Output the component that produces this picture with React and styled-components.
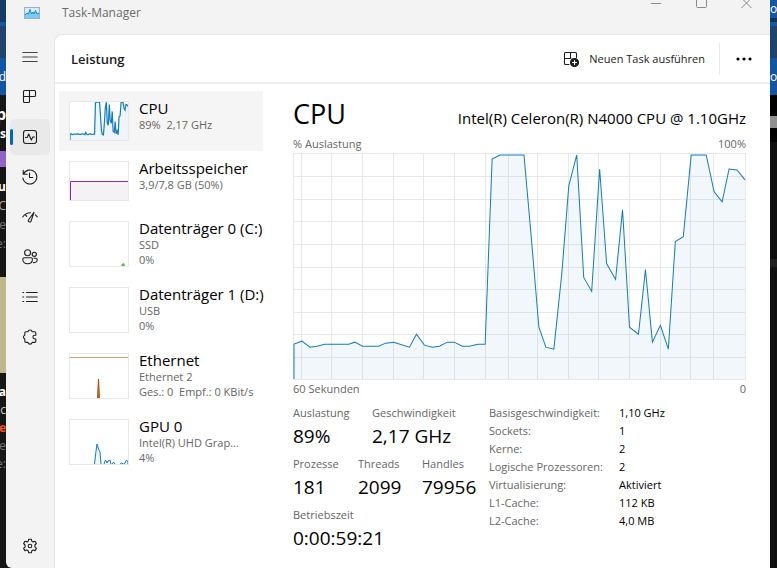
import React, { useState } from 'react';
import styled, { createGlobalStyle } from 'styled-components';

const GlobalStyle = createGlobalStyle`
  * {
    box-sizing: border-box;
  }

  body {
    margin: 0;
    background: #111;
    font-family: 'Open Sans', 'Noto Sans', sans-serif;
    color: #000;
    overflow: hidden;
  }

  button {
    font: inherit;
    color: inherit;
    border: 0;
    padding: 0;
    background: transparent;
    cursor: pointer;
  }
`;

// CPU usage over the last minute, in graph units (453 x 226)
const cpuHistory = [
  [0, 191], [8, 188], [16, 194], [23, 193], [31, 191], [55, 191], [61, 189], [69, 193],
  [75, 193], [85, 193], [92, 190], [100, 189], [116, 194], [123, 181], [131, 192],
  [139, 194], [146, 193], [154, 189], [161, 189], [169, 193], [176, 193], [185, 191],
  [192, 191], [199, 5], [207, 1], [231, 1], [238, 80], [246, 174], [253, 194], [261, 196],
  [269, 120], [276, 32], [284, 1], [291, 124], [299, 138], [307, 15], [314, 110],
  [323, 126], [330, 56], [337, 174], [346, 181], [353, 116], [360, 189], [368, 172],
  [376, 196], [383, 88], [391, 83], [399, 1], [414, 1], [422, 38], [430, 48], [437, 15],
  [445, 16], [453, 26],
];

const gridColumns = [8, 38, 69, 100, 130, 161, 192, 215, 245, 276, 306, 337, 368, 398, 421];
const gridRows = [23, 46, 68, 91, 114, 136, 159, 181, 204];

const cpuPoints = cpuHistory.map((p) => p.join(',')).join(' ');

const resources = [
  { id: 'cpu', title: 'CPU', lines: ['89%  2,17 GHz'] },
  { id: 'memory', title: 'Arbeitsspeicher', lines: ['3,9/7,8 GB (50%)'] },
  { id: 'disk0', title: 'Datenträger 0 (C:)', lines: ['SSD', '0%'] },
  { id: 'disk1', title: 'Datenträger 1 (D:)', lines: ['USB', '0%'] },
  { id: 'ethernet', title: 'Ethernet', lines: ['Ethernet 2', 'Ges.: 0  Empf.: 0 KBit/s'] },
  { id: 'gpu', title: 'GPU 0', lines: ['Intel(R) UHD Grap...', '4%'] },
];

const statRows = [
  [
    { label: 'Auslastung', value: '89%', width: 79 },
    { label: 'Geschwindigkeit', value: '2,17 GHz' },
  ],
  [
    { label: 'Prozesse', value: '181', width: 65 },
    { label: 'Threads', value: '2099', width: 64 },
    { label: 'Handles', value: '79956' },
  ],
  [{ label: 'Betriebszeit', value: '0:00:59:21' }],
];

const specs = [
  ['Basisgeschwindigkeit:', '1,10 GHz'],
  ['Sockets:', '1'],
  ['Kerne:', '2'],
  ['Logische Prozessoren:', '2'],
  ['Virtualisierung:', 'Aktiviert'],
  ['L1-Cache:', '112 KB'],
  ['L2-Cache:', '4,0 MB'],
];

// Desktop behind the window
const Desktop = styled.div`
  display: flex;
  min-height: 100vh;
  background: #161616;
`;

const Strip = styled.div`
  flex: none;
  width: ${(props) => props.$width}px;
  display: flex;
  flex-direction: column;
  overflow: hidden;
`;

const Band = styled.div`
  flex: none;
  height: ${(props) => props.$height}px;
  background: ${(props) => props.$bg || '#161616'};
  color: ${(props) => props.$color || '#fff'};
  font-size: ${(props) => props.$size || 12}px;
  font-weight: ${(props) => (props.$bold ? 700 : 400)};
  line-height: ${(props) => props.$height}px;
  display: flex;
  justify-content: ${(props) => (props.$start ? 'flex-start' : 'flex-end')};
  white-space: nowrap;
`;

const Window = styled.div`
  flex: 1;
  min-width: 0;
  display: flex;
  flex-direction: column;
  background: #f3f3f3;
  border-radius: 0 0 0 6px;
  overflow: hidden;
`;

const TitleBar = styled.header`
  display: flex;
  height: 34px;
  padding: 0 1px 8px 18px;
`;

const AppTitle = styled.div`
  flex: 1;
  display: flex;
  align-items: center;
  gap: 22px;
  font-size: 12px;
  line-height: 16px;
  color: #6b6b6b;
`;

const WindowButton = styled.button`
  width: 45px;
  height: 26px;
  display: flex;
  justify-content: center;
  align-items: flex-start;
`;

const Main = styled.div`
  flex: 1;
  display: flex;
`;

const Sidebar = styled.nav`
  flex: none;
  width: 48px;
  padding: 5px 4px 4px;
  display: flex;
  flex-direction: column;
  gap: 4px;
`;

const NavButton = styled.button`
  width: 40px;
  height: 36px;
  display: flex;
  align-items: center;
  border-radius: 5px;
  background: ${(props) => (props.$active ? '#e9e9e9' : 'transparent')};
  margin-top: ${(props) => (props.$last ? 'auto' : 0)};

  &::before {
    content: '';
    width: 3px;
    height: 16px;
    margin-right: 9px;
    border-radius: 2px;
    background: ${(props) => (props.$active ? '#0067c0' : 'transparent')};
  }

  &:hover {
    background: #e9e9e9;
  }
`;

const Panel = styled.main`
  flex: 1;
  min-width: 0;
  display: flex;
  flex-direction: column;
  background: #fff;
  border-top: 1px solid #e5e5e5;
  border-left: 1px solid #e5e5e5;
  border-top-left-radius: 8px;
`;

const Toolbar = styled.div`
  display: flex;
  align-items: center;
  height: 49px;
  padding: 0 8px 0 16px;
  border-bottom: 2px solid #eeeeee;
`;

const PageTitle = styled.h1`
  flex: 1;
  margin: 0;
  font-size: 13px;
  font-weight: 600;
  line-height: 20px;
  color: #1b1b1b;
`;

const NewTaskButton = styled.button`
  display: flex;
  align-items: center;
  gap: 10px;
  padding-right: 14px;
  font-size: 11px;
  line-height: 32px;
  color: #1b1b1b;
  border-right: 1px solid #e8e8e8;
`;

const MoreButton = styled.button`
  display: flex;
  justify-content: center;
  width: 36px;
  margin-left: 6px;
  height: 32px;
  align-items: center;
`;

const Content = styled.div`
  flex: 1;
  display: flex;
  gap: 30px;
  padding: 7px 24px 0 4px;
`;

const ResourceList = styled.div`
  flex: none;
  width: 204px;
`;

const Resource = styled.button`
  display: flex;
  align-items: flex-start;
  gap: 10px;
  width: 100%;
  height: ${(props) => (props.$tall ? 66 : 60)}px;
  padding: 8px 0 0 10px;
  text-align: left;
  background: ${(props) => (props.$active ? '#f5f5f5' : 'transparent')};
`;

const Thumb = styled.svg`
  flex: none;
  display: block;
  width: 60px;
  height: ${(props) => (props.$tall ? 46 : 40)}px;
  margin-top: 2px;
  border: 1px solid #e8e8e8;
  background: #fff;
`;

const ResourceText = styled.span`
  display: flex;
  flex-direction: column;
  white-space: pre;
`;

const ResourceTitle = styled.span`
  font-size: 15px;
  line-height: 18px;
`;

const ResourceLine = styled.span`
  font-size: 11px;
  line-height: 15px;
  color: #666;
`;

const Details = styled.section`
  flex: 1;
  min-width: 0;
`;

const DetailsHeader = styled.div`
  display: flex;
  justify-content: space-between;
  align-items: baseline;
  height: 44px;
  padding-top: 5px;
`;

const DetailsTitle = styled.h2`
  margin: 0;
  font-size: 27px;
  font-weight: 400;
  line-height: 36px;
`;

const CpuName = styled.span`
  font-size: 15px;
  line-height: 20px;
`;

const GraphLabels = styled.div`
  display: flex;
  justify-content: space-between;
  font-size: 11px;
  line-height: 18px;
  color: #666;
`;

const Graph = styled.svg`
  display: block;
  width: 100%;
  height: 227px;
  border: 1px solid #e8e8e8;
  overflow: visible;

  line {
    stroke: #e8e8e8;
    shape-rendering: crispEdges;
  }

  line,
  polyline {
    vector-effect: non-scaling-stroke;
  }
`;

const Figures = styled.div`
  display: flex;
  margin-top: 6px;
`;

const Stats = styled.div`
  width: 196px;
  display: flex;
  flex-direction: column;
`;

const StatRow = styled.dl`
  display: flex;
  margin: 0;
  height: 51px;
`;

const Stat = styled.div`
  width: ${(props) => (props.$width ? `${props.$width}px` : 'auto')};
  white-space: nowrap;
`;

const StatLabel = styled.dt`
  font-size: 11px;
  line-height: 18px;
  color: #666;
`;

const StatValue = styled.dd`
  margin: 0;
  font-size: 19px;
  line-height: 28px;
`;

const Specs = styled.table`
  align-self: flex-start;
  border-collapse: collapse;
  font-size: 11px;
  line-height: 18px;

  th,
  td {
    padding: 0;
    font-weight: 400;
    text-align: left;
    white-space: nowrap;
  }

  th {
    width: 130px;
    color: #666;
  }
`;

const Icon = ({ children }) => (
  <svg
    width="16"
    height="16"
    viewBox="0 0 16 16"
    fill="none"
    stroke="#1f1f1f"
    strokeWidth="1.1"
    strokeLinecap="round"
    strokeLinejoin="round"
    aria-hidden="true"
  >
    {children}
  </svg>
);

const navIcons = {
  menu: <path d="M.8 3.5h14.4M.8 8h14.4M.8 12.5h14.4" stroke="#444" />,
  processes: (
    <path d="M2.5 1.5h10a1 1 0 0 1 1 1v4a1 1 0 0 1-1 1h-11M7.5 1.5v11a1 1 0 0 1-1 1h-4a1 1 0 0 1-1-1v-10a1 1 0 0 1 1-1" />
  ),
  performance: (
    <>
      <rect x="1.5" y="1.5" width="13" height="13" rx="2.5" />
      <path d="M3.5 8.5h1.7L6.7 5l2.6 6 1.5-3h1.7" />
    </>
  ),
  history: (
    <path d="M1.2 1.2v4h4M1.5 5a7 7 0 1 1-.6 4M7.5 4v4.5h3.2" />
  ),
  startup: (
    <>
      <path d="M.7 8A9.8 9.8 0 0 1 8.5 3.8M13.4 5.9a10 10 0 0 1 1.9 2M3.5 5.7l1.2 1.6" />
      <path d="M12 3.4 6.4 11c-.8 1.5 1.4 2.9 2.6 1.3l3-8.9" />
    </>
  ),
  users: (
    <>
      <circle cx="5.6" cy="3.8" r="3" />
      <circle cx="12.3" cy="5.3" r="2.1" />
      <path d="M2.2 8.8H9a1.4 1.4 0 0 1 1.4 1.4c0 3-2 4.6-4.8 4.6S.8 13.2.8 10.2a1.4 1.4 0 0 1 1.4-1.4z" />
      <path d="M12 9.3h2a1.2 1.2 0 0 1 1.2 1.2c0 2.2-1.3 3.3-3.7 3.1" />
    </>
  ),
  details: (
    <>
      <path d="M4.5 3.5h10.7M4.5 8h10.7M4.5 12.5h10.7" />
      <path d="M.8 3.5h.9M.8 8h.9M.8 12.5h.9" />
    </>
  ),
  services: (
    <path d="M4 2.8h1.9a2.200 2.200 0 0 1 4.300 0h2.400A1.200 1.200 0 0 1 13.800 4v2.200h-1a1.900 1.900 0 0 0 0 3.800h1v2.200a1.200 1.200 0 0 1-1.200 1.200h-2.400a2.200 2.200 0 0 1-4.300 0H4a1.200 1.200 0 0 1-1.200-1.200V10a2 2 0 0 1 0-3.800V4A1.200 1.200 0 0 1 4 2.800z" />
  ),
  settings: (
    <>
      <path d="M6.7 1.2h2.600l.5 2 1.300.7 2-.6 1.300 2.200-1.500 1.500v1.900l1.500 1.500-1.300 2.200-2-.6-1.300.8-.5 2H6.700l-.5-2-1.300-.8-2 .6-1.300-2.200 1.500-1.500V7L1.600 5.500l1.300-2.200 2 .6 1.300-.7z" />
      <circle cx="8" cy="8" r="1.8" />
    </>
  ),
};

const navItems = [
  ['menu', 'Navigation öffnen'],
  ['processes', 'Prozesse'],
  ['performance', 'Leistung'],
  ['history', 'App-Verlauf'],
  ['startup', 'Autostart von Apps'],
  ['users', 'Benutzer'],
  ['details', 'Details'],
  ['services', 'Dienste'],
];

const AppLogo = () => (
  <svg width="16" height="12" viewBox="0 0 16 12" aria-hidden="true">
    <rect x=".5" y=".5" width="15" height="11" fill="#d5ecfa" stroke="#a3afb8" />
    <path d="M1 8l2-2 1.500 1L6 2.500 7.500 7 9 5l1 2 1.500-3.500L13 7l2-1v5H1z" fill="#7accf9" />
    <path d="M1 8l2-2 1.500 1L6 2.500 7.500 7 9 5l1 2 1.500-3.500L13 7l2-1" fill="none" stroke="#1688d8" />
  </svg>
);

const CpuThumb = () => (
  <Thumb viewBox="0 0 453 226" preserveAspectRatio="none">
    <polygon points={`0,226 ${cpuPoints} 453,226`} fill="#eff5fa" />
    <polyline
      points={`0,226 ${cpuPoints}`}
      fill="none"
      stroke="#117dbb"
      strokeWidth="1.2"
      vectorEffect="non-scaling-stroke"
    />
  </Thumb>
);

const ResourceThumb = ({ id }) => {
  if (id === 'cpu') return <CpuThumb />;
  if (id === 'memory') {
    return (
      <Thumb viewBox="0 0 58 38">
        <path d="M0 19.5h58V38H0z" fill="#f4f2f4" />
        <path d="M.5 38V19.5H58" fill="none" stroke="#9528b4" />
      </Thumb>
    );
  }
  return (
    <Thumb $tall viewBox="0 0 58 44">
      {id === 'disk0' && <path d="M51 44l1-2 1.500-1 1 1 .5 2z" fill="#6fb544" />}
      {id === 'ethernet' && (
        <>
          <path d="M0 3.5h58" stroke="#d3a172" />
          <path d="M27.5 44l1-19 1 19z" fill="#c98550" stroke="#a74f01" />
        </>
      )}
      {id === 'gpu' && (
        <path
          d="M24.5 44l1-9 1.500-11 1.500 5 1.500 3 1 12M34 44l1.500-4 1.500 3 1-2 2-1 1 4M42 44l1.500-2 1.500 2M50 44l1.500-1 2 1 1.500-1 1.500-3 1.500 2v2"
          fill="#eff5fa"
          stroke="#117dbb"
        />
      )}
    </Thumb>
  );
};

const CpuGraph = () => (
  <Graph viewBox="0 0 453 226" preserveAspectRatio="none" role="img" aria-label="CPU-Auslastung">
    {gridColumns.map((x) => (
      <line key={x} x1={x} x2={x} y1="0" y2="226" />
    ))}
    {gridRows.map((y) => (
      <line key={y} x1="0" x2="453" y1={y} y2={y} />
    ))}
    <polygon points={`0,226 ${cpuPoints} 453,226`} fill="#116fbb" fillOpacity="0.06" />
    <polyline points={`0,226 ${cpuPoints}`} fill="none" stroke="#117dbb" />
  </Graph>
);

const App = () => {
  const [page, setPage] = useState('performance');
  const [selected, setSelected] = useState('cpu');

  return (
    <>
      <GlobalStyle />
      <Desktop>
        <Strip $width={6} aria-hidden="true">
          <Band $height={22} $bg="#153c69" />
          <Band $height={4} $bg="#1657a4" />
          <Band $height={32} $bg="#1e446e" />
          <Band $height={37} $bg="#1255a5">d</Band>
          <Band $height={8} />
          <Band $height={22} $size={16} $bold>p</Band>
          <Band $height={18} $bold>s</Band>
          <Band $height={8} />
          <Band $height={16} $bg="#9162c8" />
          <Band $height={10} />
          <Band $height={20} $bold>u</Band>
          <Band $height={18} $color="#aaa">C</Band>
          <Band $height={20} $color="#777">e</Band>
          <Band $height={18} $color="#777">e:</Band>
          <Band $height={24} />
          <Band $height={96} $bg="#bdb98a" />
          <Band $height={10} />
          <Band $height={18} $bold>a</Band>
          <Band $height={18} $color="#ccc">ac</Band>
          <Band $height={18} $color="#f4511e" $bold>e</Band>
          <Band $height={18} $color="#777">e</Band>
          <Band $height={18} $color="#777">e:</Band>
        </Strip>

        <Window>
          <TitleBar>
            <AppTitle>
              <AppLogo />
              Task-Manager
            </AppTitle>
            <WindowButton aria-label="Minimieren">
              <svg width="11" height="9" viewBox="0 0 11 9">
                <path d="M0 3.5h10" stroke="#8a8a8a" />
              </svg>
            </WindowButton>
            <WindowButton aria-label="Maximieren">
              <svg width="11" height="9" viewBox="0 0 11 9">
                <path d="M.5 0v6.5a1 1 0 0 0 1 1h8a1 1 0 0 0 1-1V0" fill="none" stroke="#8a8a8a" />
              </svg>
            </WindowButton>
            <WindowButton aria-label="Schließen">
              <svg width="11" height="9" viewBox="0 0 11 9">
                <path d="M.5 8l8-8M10.5 8l-8-8" stroke="#8a8a8a" />
              </svg>
            </WindowButton>
          </TitleBar>

          <Main>
            <Sidebar>
              {navItems.map(([key, label]) => (
                <NavButton
                  key={key}
                  aria-label={label}
                  $active={page === key}
                  onClick={() => key !== 'menu' && setPage(key)}
                >
                  <Icon>{navIcons[key]}</Icon>
                </NavButton>
              ))}
              <NavButton
                $last
                aria-label="Einstellungen"
                $active={page === 'settings'}
                onClick={() => setPage('settings')}
              >
                <Icon>{navIcons.settings}</Icon>
              </NavButton>
            </Sidebar>

            <Panel>
              <Toolbar>
                <PageTitle>Leistung</PageTitle>
                <NewTaskButton>
                  <Icon>
                    <path d="M13.5 6.5v-4a1 1 0 0 0-1-1h-10a1 1 0 0 0-1 1v10a1 1 0 0 0 1 1H6M7.5 1.5V7M1.5 7.5H8" />
                    <circle cx="11.5" cy="11.5" r="4" fill="#1b1b1b" />
                    <path d="M11.5 9.5v4M9.5 11.5h4" stroke="#fff" />
                  </Icon>
                  Neuen Task ausführen
                </NewTaskButton>
                <MoreButton aria-label="Weitere Optionen">
                  <svg width="16" height="4" viewBox="0 0 16 4">
                    <circle cx="2" cy="2" r="1.6" />
                    <circle cx="8" cy="2" r="1.6" />
                    <circle cx="14" cy="2" r="1.6" />
                  </svg>
                </MoreButton>
              </Toolbar>

              <Content>
                <ResourceList>
                  {resources.map((item) => (
                    <Resource
                      key={item.id}
                      $tall={item.lines.length > 1}
                      $active={selected === item.id}
                      onClick={() => setSelected(item.id)}
                    >
                      <ResourceThumb id={item.id} />
                      <ResourceText>
                        <ResourceTitle>{item.title}</ResourceTitle>
                        {item.lines.map((line) => (
                          <ResourceLine key={line}>{line}</ResourceLine>
                        ))}
                      </ResourceText>
                    </Resource>
                  ))}
                </ResourceList>

                <Details>
                  <DetailsHeader>
                    <DetailsTitle>CPU</DetailsTitle>
                    <CpuName>Intel(R) Celeron(R) N4000 CPU @ 1.10GHz</CpuName>
                  </DetailsHeader>
                  <GraphLabels>
                    <span>% Auslastung</span>
                    <span>100%</span>
                  </GraphLabels>
                  <CpuGraph />
                  <GraphLabels>
                    <span>60 Sekunden</span>
                    <span>0</span>
                  </GraphLabels>

                  <Figures>
                    <Stats>
                      {statRows.map((row) => (
                        <StatRow key={row[0].label}>
                          {row.map((stat) => (
                            <Stat key={stat.label} $width={stat.width}>
                              <StatLabel>{stat.label}</StatLabel>
                              <StatValue>{stat.value}</StatValue>
                            </Stat>
                          ))}
                        </StatRow>
                      ))}
                    </Stats>
                    <Specs>
                      <tbody>
                        {specs.map(([name, value]) => (
                          <tr key={name}>
                            <th scope="row">{name}</th>
                            <td>{value}</td>
                          </tr>
                        ))}
                      </tbody>
                    </Specs>
                  </Figures>
                </Details>
              </Content>
            </Panel>
          </Main>
        </Window>

        <Strip $width={7} aria-hidden="true">
          <Band $height={18} $bg="#1456a5" $start>os</Band>
          <Band $height={4} $bg="#133457" />
          <Band $height={4} $bg="#1657a4" />
          <Band $height={32} $bg="#1e446e" />
          <Band $height={37} $bg="#1255a5" $start>or</Band>
          <Band $height={21} $bg="#000" />
          <Band $height={12} $bg="#8f8f8f" />
          <Band $height={14} $bg="#000" />
          <Band $height={117} $bg="#0e0e0e" />
          <Band $height={8} $bg="#1f1f1f" />
          <Band $height={301} $bg="#101010" />
        </Strip>
      </Desktop>
    </>
  );
};

export default App;
